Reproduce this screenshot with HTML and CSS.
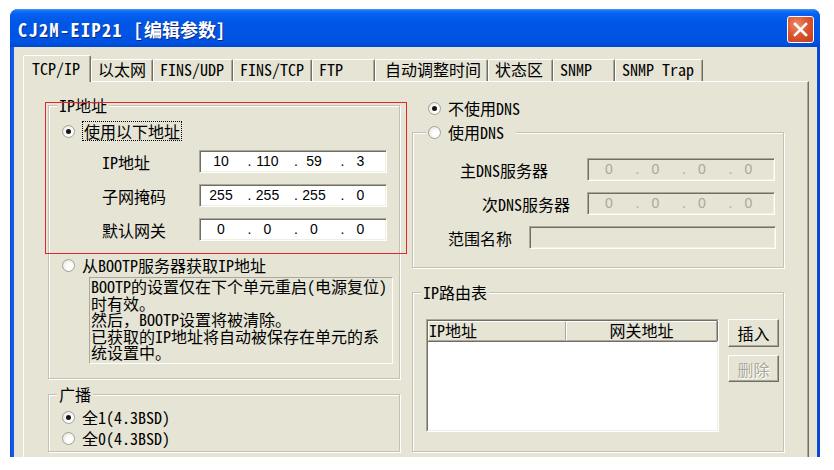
FILE: index.html
```html
<!DOCTYPE html>
<html lang="zh-CN">
<head>
<meta charset="utf-8">
<title>CJ2M-EIP21 [编辑参数]</title>
<link rel="stylesheet" href="styles.css">
</head>
<body>
<div class="window">
  <div class="titlebar">
    <span class="title"><span class="lt">CJ2M-EIP21 [</span>编辑参数<span class="lt">]</span></span>
    <button class="close" aria-label="关闭">
      <svg width="25" height="25" viewBox="0 0 25 25"><path d="M7 7L18 18M18 7L7 18" stroke="#fff" stroke-width="2.6" stroke-linecap="square" fill="none"/></svg>
    </button>
  </div>
  <div class="body">
    <div class="tabs">
      <div class="tab active w-tcp">TCP/IP</div>
      <div class="tab w-eth">以太网</div>
      <div class="tab w-udp">FINS/UDP</div>
      <div class="tab w-ftcp">FINS/TCP</div>
      <div class="tab w-ftp">FTP</div>
      <div class="tab w-auto">自动调整时间</div>
      <div class="tab w-stat">状态区</div>
      <div class="tab w-snmp">SNMP</div>
      <div class="tab w-trap">SNMP Trap</div>
    </div>
    <div class="page">
      <div class="col-left">
        <div class="group ip-group">
          <div class="group-label">IP地址</div>
          <div class="radio-row use-row"><span class="radio checked"></span><span class="focus">使用以下地址</span></div>
          <div class="field-row first">
            <span class="lbl lbl-ip">IP地址</span>
            <div class="ipbox"><span class="oct">10</span><span class="dot">.</span><span class="oct">110</span><span class="dot">.</span><span class="oct">59</span><span class="dot">.</span><span class="oct">3</span></div>
          </div>
          <div class="field-row">
            <span class="lbl lbl-ip">子网掩码</span>
            <div class="ipbox"><span class="oct">255</span><span class="dot">.</span><span class="oct">255</span><span class="dot">.</span><span class="oct">255</span><span class="dot">.</span><span class="oct">0</span></div>
          </div>
          <div class="field-row">
            <span class="lbl lbl-ip">默认网关</span>
            <div class="ipbox"><span class="oct">0</span><span class="dot">.</span><span class="oct">0</span><span class="dot">.</span><span class="oct">0</span><span class="dot">.</span><span class="oct">0</span></div>
          </div>
          <div class="radio-row bootp-row"><span class="radio"></span><span class="rtext">从BOOTP服务器获取IP地址</span></div>
          <div class="note">
            <div class="nl">BOOTP的设置仅在下个单元重启(电源复位)</div>
            <div class="nl">时有效。</div>
            <div class="nl">然后，BOOTP设置将被清除。</div>
            <div class="nl">已获取的IP地址将自动被保存在单元的系</div>
            <div class="nl">统设置中。</div>
          </div>
        </div>
        <div class="group bc-group">
          <div class="group-label">广播</div>
          <div class="radio-row bc-first"><span class="radio checked"></span><span class="rtext">全1(4.3BSD)</span></div>
          <div class="radio-row bc-second"><span class="radio"></span><span class="rtext">全0(4.3BSD)</span></div>
        </div>
        <div class="highlight"></div>
      </div>
      <div class="col-right">
        <div class="radio-row nodns-row"><span class="radio checked"></span><span class="rtext">不使用DNS</span></div>
        <div class="group dns-group">
          <div class="group-label radio-label"><span class="radio"></span><span class="rtext">使用DNS</span></div>
          <div class="field-row dns1">
            <span class="lbl lbl-d1">主DNS服务器</span>
            <div class="ipbox dis"><span class="oct">0</span><span class="dot">.</span><span class="oct">0</span><span class="dot">.</span><span class="oct">0</span><span class="dot">.</span><span class="oct">0</span></div>
          </div>
          <div class="field-row">
            <span class="lbl lbl-d2">次DNS服务器</span>
            <div class="ipbox dis"><span class="oct">0</span><span class="dot">.</span><span class="oct">0</span><span class="dot">.</span><span class="oct">0</span><span class="dot">.</span><span class="oct">0</span></div>
          </div>
          <div class="field-row">
            <span class="lbl lbl-d3">范围名称</span>
            <div class="edit dis"></div>
          </div>
        </div>
        <div class="group route-group">
          <div class="group-label">IP路由表</div>
          <div class="route-row">
            <div class="listview">
              <div class="lv-inner">
                <div class="lv-head">
                  <div class="lv-col c1">IP地址</div>
                  <div class="lv-col c2">网关地址</div>
                </div>
              </div>
            </div>
            <div class="btns">
              <button class="btn">插入</button>
              <button class="btn disabled">删除</button>
            </div>
          </div>
        </div>
      </div>
    </div>
  </div>
</div>
</body>
</html>
```

FILE: styles.css
```css
* { box-sizing: border-box; }
html, body { margin: 0; padding: 0; background: #fff; }
body {
  font-family: "Noto Sans Mono CJK SC", "Noto Sans CJK SC", sans-serif;
  font-size: 16px;
  color: #000;
}

.window {
  margin: 9px 0 0 10px;
  width: 810px;
  height: 448px;
  background: linear-gradient(90deg, #0a46d2 0, #1a62ea 3px, #0a50dc 4px, #0a50dc calc(100% - 3px), #0a3fc8 100%);
  border-radius: 8px 8px 0 0;
  overflow: hidden;
  display: flex;
  flex-direction: column;
}

.titlebar {
  height: 38px;
  flex: none;
  display: flex;
  align-items: flex-start;
  background: linear-gradient(180deg, #4a96ff 0, #1470f6 2px, #0560f0 5px, #0058e8 12px, #0055e4 60%, #0052e2 88%, #0046cf 100%);
}
.title {
  margin: 9px 0 0 8px;
  color: #fff;
  font-weight: bold;
  font-size: 18px;
  line-height: 22px;
  white-space: nowrap;
  text-shadow: 1px 1px 0 #0a2a86;
}
.title .lt { letter-spacing: 1.5px; }

.close {
  margin: 7px 6px 0 auto;
  width: 27px;
  height: 27px;
  padding: 0;
  border: 1px solid #fff;
  border-radius: 3px;
  background: radial-gradient(circle at 35% 30%, #ee8a6a 0, #dc5630 45%, #c23c1a 100%);
  display: flex;
  align-items: center;
  justify-content: center;
}

.body {
  flex: 1;
  margin: 0 3px 0 4px;
  background: #e5e4d5;
  padding: 8px 8px 0 9px;
  display: flex;
  flex-direction: column;
  min-height: 0;
}

.tabs {
  height: 26px;
  flex: none;
  display: flex;
  align-items: flex-end;
}
.tab {
  height: 22px;
  border: 1px solid;
  border-bottom: none;
  border-color: #fff #716f64 transparent #fff;
  box-shadow: inset -1px 0 0 #aca899;
  border-radius: 2px 2px 0 0;
  padding: 1px 0 0 6px;
  line-height: 17px;
  white-space: nowrap;
  background: #e5e4d5;
}
.tab.active {
  height: 27px;
  margin-bottom: -1px;
  padding: 4px 0 0 8px;
  position: relative;
  z-index: 1;
}
.w-tcp { width: 68px; }
.w-eth { width: 62px; }
.w-udp { width: 80px; }
.w-ftcp { width: 79px; }
.w-ftp { width: 63px; }
.w-auto { width: 113px; padding-left: 9px; }
.w-stat { width: 65px; }
.w-snmp { width: 62px; }
.w-trap { width: 88px; }

.page {
  flex: 1;
  border-top: 1px solid #fff;
  border-left: 1px solid #fff;
  border-right: 1px solid #716f64;
  box-shadow: inset -1px 0 0 #aca899;
  display: flex;
  align-items: flex-start;
}

.col-left {
  margin-left: 24px;
  width: 352px;
  position: relative;
}
.col-right {
  margin-left: 12px;
  width: 372px;
}

.group {
  border: 1px solid #c3c2b2;
  box-shadow: 1px 1px 0 #fff, inset 1px 1px 0 #fff;
}
.group-label {
  margin: -9px 0 0 8px;
  padding: 0 2px;
  width: fit-content;
  line-height: 16px;
  height: 16px;
  background: #e5e4d5;
  white-space: nowrap;
}

.radio-row {
  height: 20px;
  display: flex;
  align-items: center;
  white-space: nowrap;
}
.radio {
  flex: none;
  width: 13px;
  height: 13px;
  border-radius: 50%;
  border: 1px solid #a3a296;
  background: radial-gradient(circle at 62% 62%, #fff 0, #fff 30%, #dddcd2 100%);
  position: relative;
}
.radio.checked::after {
  content: "";
  position: absolute;
  left: 3px;
  top: 3px;
  width: 5px;
  height: 5px;
  border-radius: 50%;
  background: #161616;
}
.radio-row .radio { margin-left: 13px; }
.rtext { margin-left: 7px; line-height: 18px; }
.focus {
  margin-left: 7px;
  padding: 0 1px;
  border: 1px dotted #000;
  line-height: 18px;
}

.ip-group { margin-top: 23px; padding-bottom: 14px; }
.use-row { margin-top: 8px; }

.field-row {
  height: 23px;
  margin-top: 11px;
  display: flex;
  align-items: center;
  white-space: nowrap;
}
.field-row.first { margin-top: 9px; }
.lbl { flex: none; }
.lbl-ip { margin-left: 53px; width: 97px; }

.ipbox {
  flex: none;
  width: 188px;
  height: 23px;
  border: 1px solid;
  border-color: #aca899 #fff #fff #aca899;
  box-shadow: inset 1px 1px 0 #716f64, inset -1px -1px 0 #f1efe2;
  background: #fff;
  padding-left: 5px;
  display: flex;
  font-family: "Liberation Sans", Arial, sans-serif;
  font-size: 14px;
  line-height: 21px;
}
.oct { width: 32px; text-align: center; }
.dot { width: 14.5px; text-align: right; }
.ipbox.dis, .edit.dis { background: #e5e4d5; color: #aca899; }

.edit {
  flex: 1;
  height: 23px;
  margin-right: 7px;
  border: 1px solid;
  border-color: #aca899 #fff #fff #aca899;
  box-shadow: inset 1px 1px 0 #716f64, inset -1px -1px 0 #f1efe2;
}

.bootp-row { margin-top: 14px; }
.note {
  margin: 2px 0 0 40px;
  width: 304px;
  height: 87px;
  border: 1px solid;
  border-color: #aca899 #fff #fff #aca899;
  padding-left: 1px;
}
.nl {
  height: 16.5px;
  line-height: 16.5px;
  white-space: nowrap;
}

.bc-group { margin-top: 15px; padding-bottom: 3px; }
.bc-first { margin-top: 5px; }
.bc-second { margin-top: 1px; }

.highlight {
  position: absolute;
  left: -3px;
  top: 20px;
  width: 362px;
  height: 152px;
  border: 1px solid #e4262a;
  pointer-events: none;
}

.nodns-row { margin-top: 16px; }
.nodns-row .radio { margin-left: 16px; }

.dns-group { margin-top: 14px; padding-bottom: 18px; }
.radio-label {
  display: flex;
  align-items: center;
  margin-left: 13px;
  padding: 0 12px 0 2px;
}
.dns1 { margin-top: 18px; }
.lbl-d1 { margin-left: 47px; width: 127px; }
.lbl-d2 { margin-left: 69px; width: 105px; }
.lbl-d3 { margin-left: 35px; width: 81px; }

.route-group { margin-top: 24px; padding-bottom: 19px; }
.route-row {
  margin-top: 19px;
  display: flex;
  align-items: flex-start;
}
.listview {
  margin-left: 13px;
  width: 293px;
  height: 113px;
  border: 1px solid;
  border-color: #aca899 #fff #fff #aca899;
}
.lv-inner {
  height: 100%;
  border: 1px solid;
  border-color: #716f64 #f1efe2 #f1efe2 #716f64;
  background: #fff;
}
.lv-head {
  height: 20px;
  display: flex;
  background: #e5e4d5;
}
.lv-col {
  height: 20px;
  border: 1px solid;
  border-color: #fff #aca899 #aca899 #fff;
  box-shadow: 1px 0 0 #716f64, 0 1px 0 #716f64;
  line-height: 17px;
  white-space: nowrap;
}
.lv-col.c1 { width: 138px; padding-left: 0; }
.lv-col.c2 { flex: 1; text-align: center; }

.btns {
  margin-left: 9px;
  width: 51px;
  display: flex;
  flex-direction: column;
}
.btn {
  width: 51px;
  height: 28px;
  padding: 0;
  font-family: inherit;
  font-size: 16px;
  color: #000;
  background: #e5e4d5;
  border: 1px solid;
  border-color: #fff #716f64 #716f64 #fff;
  box-shadow: inset -1px -1px 0 #aca899;
  border-radius: 0;
}
.btn.disabled {
  margin-top: 8px;
  height: 27px;
  color: #aca899;
  text-shadow: 1px 1px 0 #fff;
}
```
